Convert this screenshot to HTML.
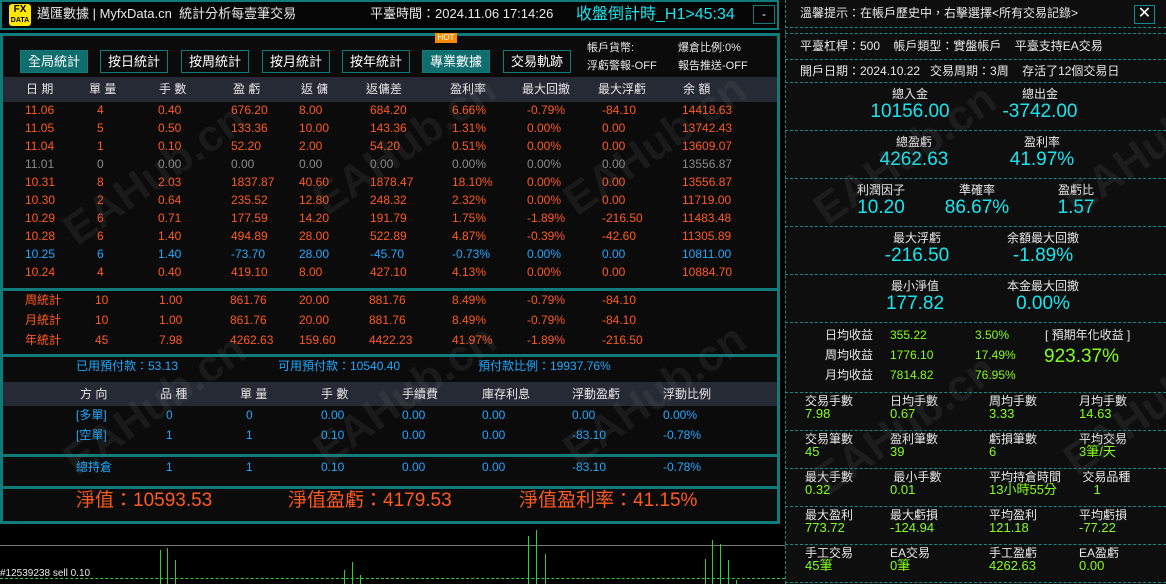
<!DOCTYPE html>
<html><head><meta charset="utf-8"><style>
*{margin:0;padding:0;box-sizing:border-box}
body{width:1166px;height:584px;background:#000;position:relative;overflow:hidden;font-family:"Liberation Sans","Noto Sans CJK TC",sans-serif;font-size:12px;color:#ddd}
.a{position:absolute;white-space:nowrap;line-height:16px}
.box{position:absolute;border:2px solid #0f7b7b}
.o{color:#ff5a1f}.g{color:#8a8a8a}.b{color:#1eaaff}.c{color:#18e6ee}.l{color:#86ff1a}.w{color:#e8e8e8}
.btn{position:absolute;top:50px;height:23px;width:68px;border:1px solid #0f7b7b;color:#fff;font-size:13px;text-align:center;line-height:21px}
.btn.f{background:#0f6d6d}
.hl{position:absolute;left:0;width:779px;height:3px;background:#0f7b7b}
.dl{position:absolute;left:785px;width:381px;border-top:1px dashed #118c8c}
.wm{position:absolute;font-size:44px;font-weight:bold;color:rgba(120,120,120,.14);transform:rotate(-35deg);white-space:nowrap}
</style></head><body>
<!-- title -->
<div class="box" style="left:0;top:0;width:779px;height:30px;background:#050505"></div>
<div class="a" style="left:9px;top:4px;width:22px;height:22px;background:#ffe600;border-radius:3px;color:#000;font-weight:bold;text-align:center;line-height:10px;font-size:10px;padding-top:1px">FX<br><span style="font-size:7px">DATA</span></div>
<div class="a w" style="left:37px;top:6px;font-size:13px">邁匯數據 | MyfxData.cn &nbsp;統計分析每壹筆交易</div>
<div class="a w" style="left:370px;top:6px;font-size:13px">平臺時間：2024.11.06 17:14:26</div>
<div class="a c" style="left:576px;top:5px;font-size:16px;line-height:19px">收盤倒計時_H1&gt;45:34</div>
<div class="a" style="left:753px;top:5px;width:22px;height:19px;border:1px solid #0f7b7b;text-align:center;line-height:16px;color:#fff">-</div>
<!-- main panel -->
<div class="box" style="left:0;top:33px;width:780px;height:491px;background:#0b0b0b;border-width:3px"></div>
<div class="btn f" style="left:20px">全局統計</div>
<div class="btn" style="left:100px">按日統計</div>
<div class="btn" style="left:181px">按周統計</div>
<div class="btn" style="left:262px">按月統計</div>
<div class="btn" style="left:342px">按年統計</div>
<div class="btn f" style="left:422px">專業數據</div>
<div class="btn" style="left:503px">交易軌跡</div>
<div class="a" style="left:435px;top:33px;width:22px;height:10px;background:#ff8a00;color:#fff;font-size:8px;line-height:10px;text-align:center">HOT</div>
<div class="a w" style="left:587px;top:40px;font-size:11px">帳戶貨幣:</div>
<div class="a w" style="left:678px;top:40px;font-size:11px">爆倉比例:0%</div>
<div class="a w" style="left:587px;top:58px;font-size:11px">浮虧警報-OFF</div>
<div class="a w" style="left:678px;top:58px;font-size:11px">報告推送-OFF</div>
<div class="a" style="left:3px;top:77px;width:774px;height:25px;background:#262a35"></div>
<div class="a w" style="left:26px;top:81px">日 期</div><div class="a w" style="left:89px;top:81px">單 量</div><div class="a w" style="left:159px;top:81px">手 數</div><div class="a w" style="left:233px;top:81px">盈 虧</div><div class="a w" style="left:301px;top:81px">返 傭</div><div class="a w" style="left:366px;top:81px">返傭差</div><div class="a w" style="left:450px;top:81px">盈利率</div><div class="a w" style="left:522px;top:81px">最大回撤</div><div class="a w" style="left:598px;top:81px">最大浮虧</div><div class="a w" style="left:683px;top:81px">余 額</div>
<div id="rows"></div>
<div class="hl" style="top:288px"></div>
<div class="hl" style="top:354px"></div>
<div class="hl" style="top:454px"></div>
<div class="hl" style="top:486px"></div>
<div class="a b" style="left:76px;top:358px">已用預付款：53.13</div>
<div class="a b" style="left:278px;top:358px">可用預付款：10540.40</div>
<div class="a b" style="left:478px;top:358px">預付款比例：19937.76%</div>
<div class="a" style="left:3px;top:382px;width:774px;height:24px;background:#262a35"></div>
<div class="a w" style="left:80px;top:386px">方 向</div><div class="a w" style="left:160px;top:386px">品 種</div><div class="a w" style="left:240px;top:386px">單 量</div><div class="a w" style="left:321px;top:386px">手 數</div><div class="a w" style="left:402px;top:386px">手續費</div><div class="a w" style="left:482px;top:386px">庫存利息</div><div class="a w" style="left:572px;top:386px">浮動盈虧</div><div class="a w" style="left:663px;top:386px">浮動比例</div>
<div id="pos"></div>
<div class="a o" style="left:76px;top:489px;font-size:19px;line-height:24px">淨值：10593.53</div>
<div class="a o" style="left:288px;top:489px;font-size:19px;line-height:24px">淨值盈虧：4179.53</div>
<div class="a o" style="left:519px;top:489px;font-size:19px;line-height:24px">淨值盈利率：41.15%</div>
<!-- chart below -->
<div class="a" style="left:0;top:545px;width:785px;height:1px;background:#777"></div>
<div class="a" style="left:0;top:578px;width:785px;border-top:1px dashed #3c3"></div>
<div class="a w" style="left:0;top:566px;font-size:10px">#12539238 sell 0.10</div>
<svg class="a" style="left:0;top:500px" width="785" height="84"><g stroke="#3c3" stroke-width="1">
<path d="M160.5 84V50M167.5 84V48M175.5 84V60M344.5 84V70M352.5 84V62M360.5 84V75M528.5 84V36M536.5 84V30M545.5 84V54M705.5 84V59M712.5 84V40M720.5 84V44M728.5 84V60M736.5 84V80M805.5 84V68"/></g></svg>
<!-- right panel -->
<div class="a" style="left:785px;top:0;width:381px;height:584px;background:#0e0e0e;border-left:1px dashed #118c8c"></div>
<div class="a w" style="left:800px;top:5px">溫馨提示：在帳戶歷史中，右擊選擇&lt;所有交易記錄&gt;</div>
<div class="a" style="left:1134px;top:5px;width:21px;height:19px;border:1px solid #118c8c;color:#fff;text-align:center;line-height:16px;font-size:16px">✕</div>
<div class="dl" style="top:27px"></div><div class="dl" style="top:33px"></div>
<div class="dl" style="top:59px"></div><div class="dl" style="top:82px"></div>
<div class="dl" style="top:130px"></div><div class="dl" style="top:178px"></div>
<div class="dl" style="top:226px"></div><div class="dl" style="top:274px"></div>
<div class="dl" style="top:322px"></div><div class="dl" style="top:392px"></div>
<div class="dl" style="top:430px"></div><div class="dl" style="top:468px"></div>
<div class="dl" style="top:506px"></div><div class="dl" style="top:544px"></div>
<div class="dl" style="top:582px"></div>
<div class="a w" style="left:800px;top:38px">平臺杠桿：500 &nbsp;&nbsp;&nbsp;帳戶類型：實盤帳戶 &nbsp;&nbsp;&nbsp;平臺支持EA交易</div>
<div class="a w" style="left:800px;top:63px">開戶日期：2024.10.22 &nbsp;&nbsp;交易周期：3周 &nbsp;&nbsp;&nbsp;存活了12個交易日</div>
<div id="big"></div>
<div id="grid"></div>
<div class="wm" style="left:50px;top:150px">EAHub.cn</div>
<div class="wm" style="left:300px;top:120px">EAHub.cn</div>
<div class="wm" style="left:550px;top:120px">EAHub.cn</div>
<div class="wm" style="left:50px;top:380px">EAHub.cn</div>
<div class="wm" style="left:300px;top:370px">EAHub.cn</div>
<div class="wm" style="left:550px;top:370px">EAHub.cn</div>
<div class="wm" style="left:800px;top:130px">EAHub.cn</div>
<div class="wm" style="left:1050px;top:120px">EAHub.cn</div>
<div class="wm" style="left:800px;top:400px">EAHub.cn</div>
<div class="wm" style="left:1050px;top:380px">EAHub.cn</div>
<script>
function S(x,y,t,c,st){return '<div class="a '+c+'" style="left:'+x+'px;top:'+y+'px;'+(st||'')+'">'+t+'</div>'}
var cx=[25,97,158,231,299,370,452,527,602,682],h='';
var R=[["11.06","4","0.40","676.20","8.00","684.20","6.66%","-0.79%","-84.10","14418.63","o"],["11.05","5","0.50","133.36","10.00","143.36","1.31%","0.00%","0.00","13742.43","o"],["11.04","1","0.10","52.20","2.00","54.20","0.51%","0.00%","0.00","13609.07","o"],["11.01","0","0.00","0.00","0.00","0.00","0.00%","0.00%","0.00","13556.87","g"],["10.31","8","2.03","1837.87","40.60","1878.47","18.10%","0.00%","0.00","13556.87","o"],["10.30","2","0.64","235.52","12.80","248.32","2.32%","0.00%","0.00","11719.00","o"],["10.29","6","0.71","177.59","14.20","191.79","1.75%","-1.89%","-216.50","11483.48","o"],["10.28","6","1.40","494.89","28.00","522.89","4.87%","-0.39%","-42.60","11305.89","o"],["10.25","6","1.40","-73.70","28.00","-45.70","-0.73%","0.00%","0.00","10811.00","b"],["10.24","4","0.40","419.10","8.00","427.10","4.13%","0.00%","0.00","10884.70","o"]];
R.forEach(function(r,i){for(var j=0;j<10;j++)h+=S(cx[j],102+i*18,r[j],r[10])});
var T=[["周統計","10","1.00","861.76","20.00","881.76","8.49%","-0.79%","-84.10"],["月統計","10","1.00","861.76","20.00","881.76","8.49%","-0.79%","-84.10"],["年統計","45","7.98","4262.63","159.60","4422.23","41.97%","-1.89%","-216.50"]];
var tx=[25,95,159,230,299,369,452,527,602];
T.forEach(function(r,i){for(var j=0;j<9;j++)h+=S(tx[j],292+i*20,r[j],'o')});
document.getElementById('rows').innerHTML=h;h='';
var px=[76,166,246,321,402,482,572,663];
[["[多單]","0","0","0.00","0.00","0.00","0.00","0.00%",407],["[空單]","1","1","0.10","0.00","0.00","-83.10","-0.78%",427],["總持倉","1","1","0.10","0.00","0.00","-83.10","-0.78%",459]].forEach(function(r){for(var j=0;j<8;j++)h+=S(px[j],r[8],r[j],'b')});
document.getElementById('pos').innerHTML=h;h='';
function B(cx,y,lab,val){return '<div class="a w" style="left:'+(cx-60)+'px;width:120px;text-align:center;top:'+y+'px">'+lab+'</div><div class="a c" style="left:'+(cx-70)+'px;width:140px;text-align:center;top:'+(y+15)+'px;font-size:19px;line-height:22px">'+val+'</div>'}
h+=B(910,86,"總入金","10156.00")+B(1040,86,"總出金","-3742.00");
h+=B(914,134,"總盈虧","4262.63")+B(1042,134,"盈利率","41.97%");
h+=B(881,182,"利潤因子","10.20")+B(977,182,"準確率","86.67%")+B(1076,182,"盈虧比","1.57");
h+=B(917,230,"最大浮虧","-216.50")+B(1043,230,"余額最大回撤","-1.89%");
h+=B(915,278,"最小淨值","177.82")+B(1043,278,"本金最大回撤","0.00%");
document.getElementById('big').innerHTML=h;h='';
[["日均收益","355.22","3.50%",327],["周均收益","1776.10","17.49%",347],["月均收益","7814.82","76.95%",367]].forEach(function(r){h+=S(825,r[3],r[0],'w')+S(890,r[3],r[1],'l')+S(975,r[3],r[2],'l')});
h+=S(1045,327,"[ 預期年化收益 ]","w")+S(1044,345,"923.37%","l","font-size:19px;line-height:24px");
var gx=[805,890,989,1079];
var G=[[["交易手數","7.98"],["日均手數","0.67"],["周均手數","3.33"],["月均手數","14.63"]],[["交易筆數","45"],["盈利筆數","39"],["虧損筆數","6"],["平均交易","3筆/天"]],[["最大手數","0.32"],["&nbsp;最小手數","0.01"],["平均持倉時間","13小時55分"],["&nbsp;交易品種","&nbsp;&nbsp;&nbsp;&nbsp;1"]],[["最大盈利","773.72"],["最大虧損","-124.94"],["平均盈利","121.18"],["平均虧損","-77.22"]],[["手工交易","45筆"],["EA交易","0筆"],["手工盈虧","4262.63"],["EA盈虧","0.00"]]];
G.forEach(function(r,i){var y=393+i*38;r.forEach(function(c,j){h+=S(gx[j],y,c[0],'w')+S(gx[j],y+13,c[1],'l','font-size:13px')})});
document.getElementById('grid').innerHTML=h;
</script>
</body></html>
